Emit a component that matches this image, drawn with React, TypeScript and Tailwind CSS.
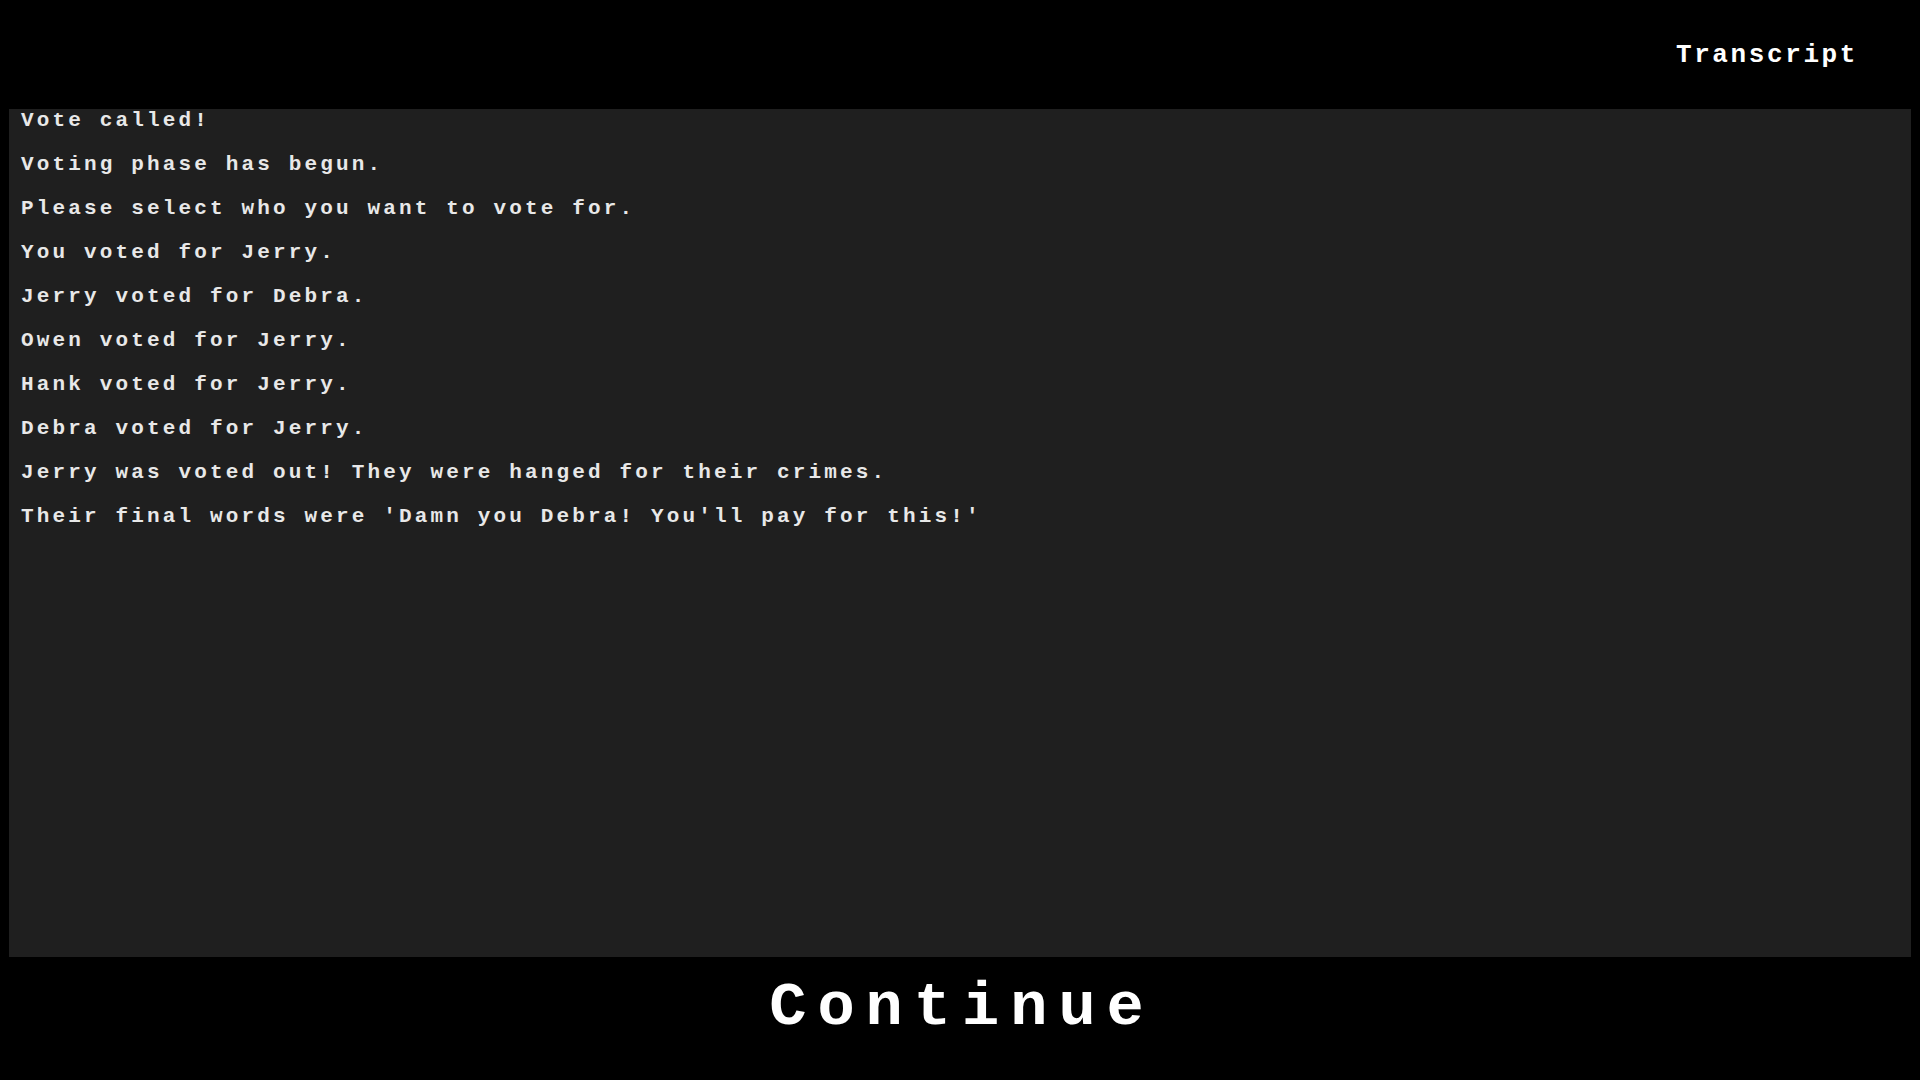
const lines = [
  'Vote called!',
  'Voting phase has begun.',
  'Please select who you want to vote for.',
  'You voted for Jerry.',
  'Jerry voted for Debra.',
  'Owen voted for Jerry.',
  'Hank voted for Jerry.',
  'Debra voted for Jerry.',
  'Jerry was voted out! They were hanged for their crimes.',
  "Their final words were 'Damn you Debra! You'll pay for this!'",
];

export default function App() {
  return (
    <div className="flex h-screen w-full flex-col bg-black font-['Liberation_Mono',monospace] font-bold">
      {/* Header */}
      <div className="flex h-[109px] shrink-0 items-center justify-end pr-[62px]">
        <button className="text-[26px] leading-none tracking-[2.6px] text-white">Transcript</button>
      </div>

      {/* Transcript panel */}
      <div className="mx-[9px] h-[848px] shrink-0 overflow-hidden bg-[#1f1f1f]">
        <div className="flex flex-col gap-5 pl-[12px]">
          {lines.map((line, i) => (
            <p key={i} className="whitespace-pre text-[21px] leading-[24px] tracking-[3.15px] text-[#e8e8e8]">
              {line}
            </p>
          ))}
        </div>
      </div>

      {/* Footer */}
      <div className="flex flex-1 items-start justify-center pt-[20px]">
        <button className="pl-[4px] text-[62px] leading-[62px] tracking-[11px] text-white">Continue</button>
      </div>
    </div>
  );
}
